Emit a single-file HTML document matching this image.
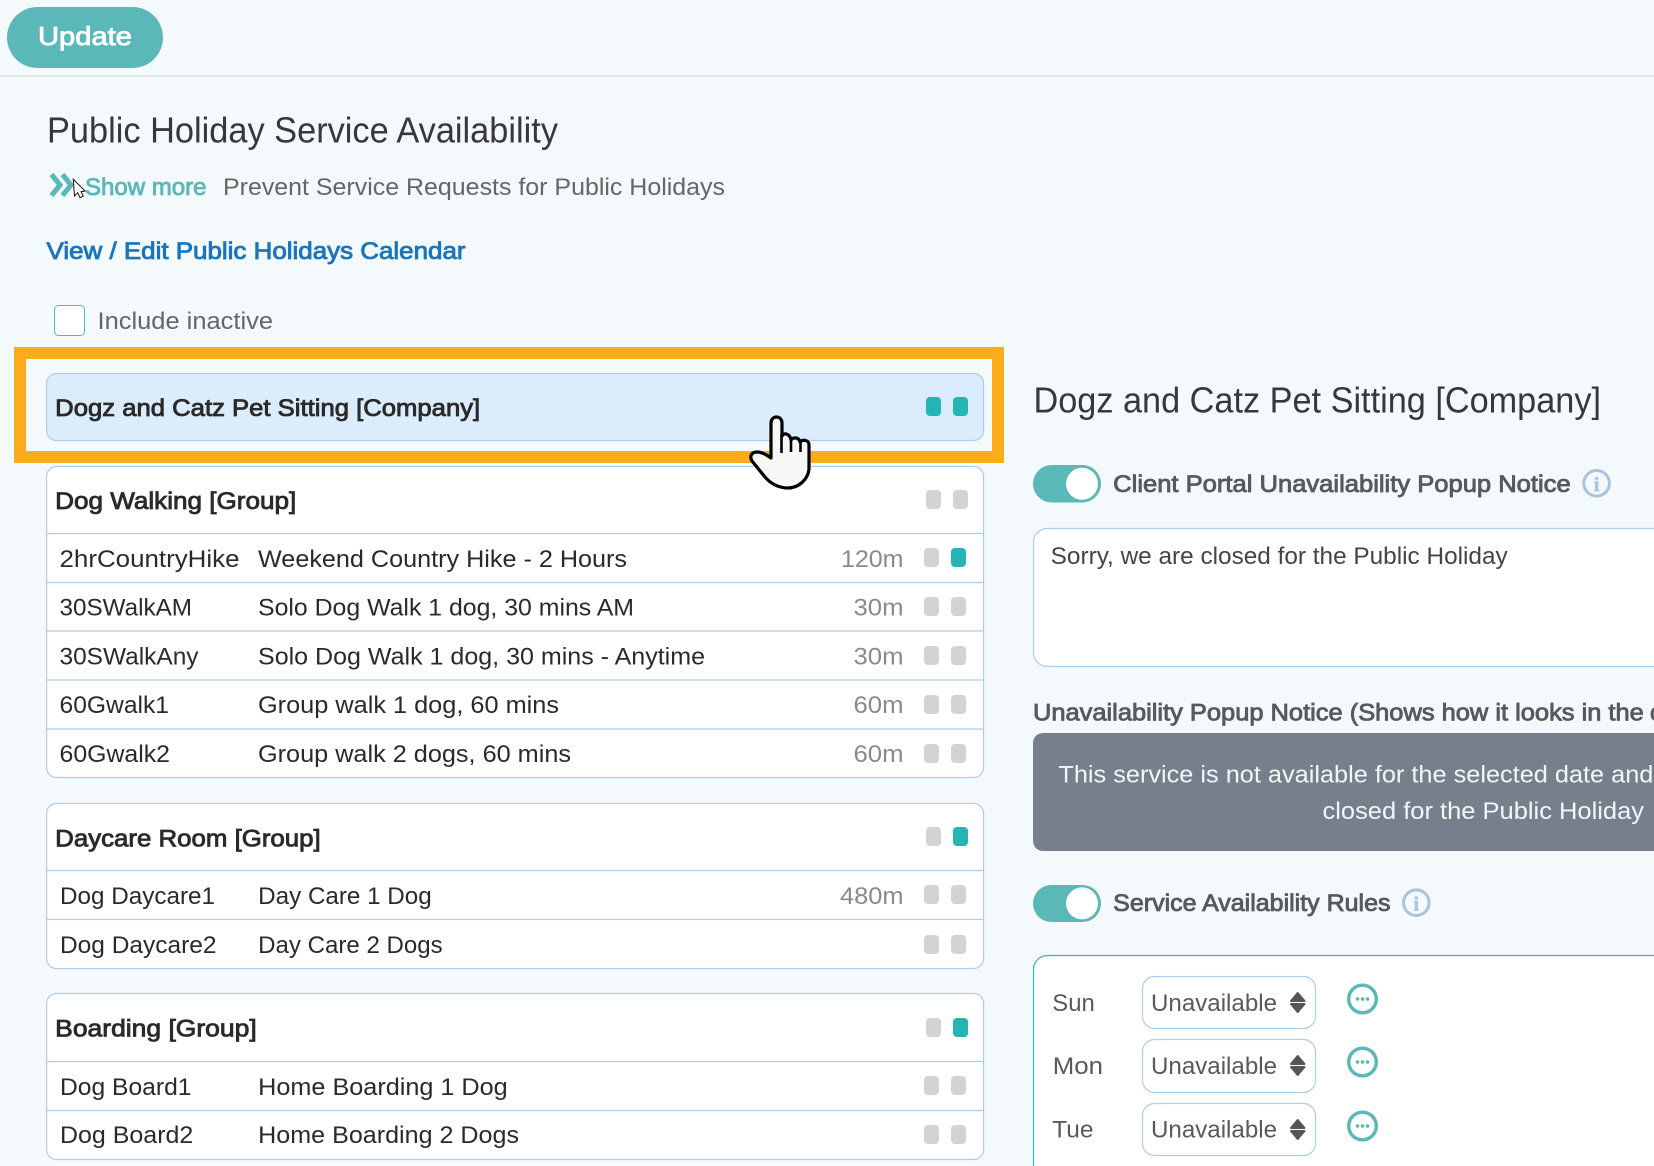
<!DOCTYPE html>
<html lang="en">
<head>
<meta charset="utf-8">
<title>Public Holiday Service Availability</title>
<style>
html,body{margin:0;padding:0;width:1654px;height:1166px;overflow:hidden;background:#f4f9fc}
svg{display:block;position:absolute;left:0;top:0}
text{font-family:"Liberation Sans",sans-serif;font-size:24px;white-space:pre}
.b{stroke-width:.85}
.h1{font-size:36px;fill:#38383a}
.dk{fill:#2a2a2a}
.b.dk{stroke:#2a2a2a}
.gy{fill:#666}
.lb{fill:#565a5e}
.b.lb{stroke:#565a5e}
.dur{fill:#8a8a8a}
.panel{fill:#fff;stroke:#aecde6;stroke-width:1.2}
.div{stroke:#aecde6;stroke-width:1.2}
.on{fill:#26b5b5}
.off{fill:#d3d3d3}
.sel{fill:#fff;stroke:#aecde6;stroke-width:1.2}
.info{fill:none;stroke:#a9c4dc;stroke-width:3}
.i{font-family:"Liberation Serif",serif;font-size:20px;font-weight:700;fill:#a9c4dc;stroke:#a9c4dc;stroke-width:.5}
.more{fill:none;stroke:#5bb8b8;stroke-width:3.4}
.dot{fill:#5bb8b8}
.arr{fill:#555;stroke:#555;stroke-width:2;stroke-linejoin:round}
</style>
</head>
<body>
<svg width="1654" height="1166" viewBox="0 0 1654 1166" xmlns="http://www.w3.org/2000/svg">
<!-- header -->
<rect x="0" y="75" width="1654" height="2" fill="#e3e8ea"/>
<rect x="7" y="7" width="156" height="61" rx="30.500" fill="#5bb8b8"/>
<text x="38" y="45" class="b" style="font-size:26px" fill="#fff" stroke="#fff" textLength="94" lengthAdjust="spacingAndGlyphs">Update</text>

<!-- title block -->
<text x="47" y="142.500" class="h1" textLength="511" lengthAdjust="spacingAndGlyphs">Public Holiday Service Availability</text>
<path d="M51.500 174.500L60 185L51.500 195.500M62.500 174.500L71 185L62.500 195.500" fill="none" stroke="#5bb8b8" stroke-width="5"/>
<text x="85" y="195" class="b" fill="#5bb8b8" stroke="#5bb8b8" textLength="121.500" lengthAdjust="spacingAndGlyphs">Show more</text>
<text x="223" y="195" class="gy" textLength="502" lengthAdjust="spacingAndGlyphs">Prevent Service Requests for Public Holidays</text>
<path d="M73.300 179.300L74.500 196L77.700 192.700L80 197.700L83.300 196L81 191.700L85 191Z" fill="#fff" stroke="#111" stroke-width="1"/>
<text x="46.500" y="259" class="b" fill="#1a75bc" stroke="#1a75bc" textLength="419" lengthAdjust="spacingAndGlyphs">View / Edit Public Holidays Calendar</text>
<rect x="54.500" y="305.500" width="30" height="30" rx="4" fill="#fff" stroke="#5bb8b8" stroke-width="1"/>
<text x="97.500" y="329" class="gy" textLength="175.500" lengthAdjust="spacingAndGlyphs">Include inactive</text>

<!-- highlighted company row -->
<rect x="20" y="353" width="978" height="104" fill="none" stroke="#fbac1c" stroke-width="12"/>
<rect x="46.600" y="373.500" width="937" height="67" rx="10" fill="#dbecfd" stroke="#aecde6" stroke-width="1.200"/>
<text x="55.200" y="416" class="b dk" textLength="425" lengthAdjust="spacingAndGlyphs">Dogz and Catz Pet Sitting [Company]</text>
<rect x="926" y="397" width="15" height="19" rx="4" class="on"/><rect x="953" y="397" width="15" height="19" rx="4" class="on"/>

<!-- Dog Walking -->
<rect x="46.600" y="466.500" width="937" height="311" rx="10" class="panel"/>
<line x1="47" x2="984" y1="533.500" y2="533.500" class="div"/>
<line x1="47" x2="984" y1="582.500" y2="582.500" class="div"/>
<line x1="47" x2="984" y1="631" y2="631" class="div"/>
<line x1="47" x2="984" y1="680" y2="680" class="div"/>
<line x1="47" x2="984" y1="729" y2="729" class="div"/>
<text x="55.200" y="509" class="b dk" textLength="241" lengthAdjust="spacingAndGlyphs">Dog Walking [Group]</text>
<rect x="926" y="490" width="15" height="19" rx="4" class="off"/><rect x="953" y="490" width="15" height="19" rx="4" class="off"/>

<text x="59.500" y="567" class="dk" textLength="180" lengthAdjust="spacingAndGlyphs">2hrCountryHike</text>
<text x="258" y="567" class="dk" textLength="369" lengthAdjust="spacingAndGlyphs">Weekend Country Hike - 2 Hours</text>
<text x="841" y="567" class="dur" textLength="62.500" lengthAdjust="spacingAndGlyphs">120m</text>
<rect x="924" y="548" width="15" height="19" rx="4" class="off"/><rect x="951" y="548" width="15" height="19" rx="4" class="on"/>

<text x="59.500" y="615.500" class="dk" textLength="132.500" lengthAdjust="spacingAndGlyphs">30SWalkAM</text>
<text x="258" y="615.500" class="dk" textLength="376" lengthAdjust="spacingAndGlyphs">Solo Dog Walk 1 dog, 30 mins AM</text>
<text x="853.500" y="615.500" class="dur" textLength="50" lengthAdjust="spacingAndGlyphs">30m</text>
<rect x="924" y="597" width="15" height="19" rx="4" class="off"/><rect x="951" y="597" width="15" height="19" rx="4" class="off"/>

<text x="59.500" y="664.500" class="dk" textLength="139" lengthAdjust="spacingAndGlyphs">30SWalkAny</text>
<text x="258" y="664.500" class="dk" textLength="447" lengthAdjust="spacingAndGlyphs">Solo Dog Walk 1 dog, 30 mins - Anytime</text>
<text x="853.500" y="664.500" class="dur" textLength="50" lengthAdjust="spacingAndGlyphs">30m</text>
<rect x="924" y="646" width="15" height="19" rx="4" class="off"/><rect x="951" y="646" width="15" height="19" rx="4" class="off"/>

<text x="59.500" y="713" class="dk" textLength="109.500" lengthAdjust="spacingAndGlyphs">60Gwalk1</text>
<text x="258" y="713" class="dk" textLength="301" lengthAdjust="spacingAndGlyphs">Group walk 1 dog, 60 mins</text>
<text x="853.500" y="713" class="dur" textLength="50" lengthAdjust="spacingAndGlyphs">60m</text>
<rect x="924" y="695" width="15" height="19" rx="4" class="off"/><rect x="951" y="695" width="15" height="19" rx="4" class="off"/>

<text x="59.500" y="762" class="dk" textLength="110.500" lengthAdjust="spacingAndGlyphs">60Gwalk2</text>
<text x="258" y="762" class="dk" textLength="313" lengthAdjust="spacingAndGlyphs">Group walk 2 dogs, 60 mins</text>
<text x="853.500" y="762" class="dur" textLength="50" lengthAdjust="spacingAndGlyphs">60m</text>
<rect x="924" y="744" width="15" height="19" rx="4" class="off"/><rect x="951" y="744" width="15" height="19" rx="4" class="off"/>

<!-- Daycare -->
<rect x="46.600" y="803.500" width="937" height="165" rx="10" class="panel"/>
<line x1="47" x2="984" y1="870.500" y2="870.500" class="div"/>
<line x1="47" x2="984" y1="919.500" y2="919.500" class="div"/>
<text x="55.200" y="846.500" class="b dk" textLength="265.500" lengthAdjust="spacingAndGlyphs">Daycare Room [Group]</text>
<rect x="926" y="827" width="15" height="19" rx="4" class="off"/><rect x="953" y="827" width="15" height="19" rx="4" class="on"/>
<text x="60" y="904" class="dk" textLength="155" lengthAdjust="spacingAndGlyphs">Dog Daycare1</text>
<text x="258.200" y="904" class="dk" textLength="173.500" lengthAdjust="spacingAndGlyphs">Day Care 1 Dog</text>
<text x="840" y="904" class="dur" textLength="63.500" lengthAdjust="spacingAndGlyphs">480m</text>
<rect x="924" y="885" width="15" height="19" rx="4" class="off"/><rect x="951" y="885" width="15" height="19" rx="4" class="off"/>
<text x="60" y="953" class="dk" textLength="156.500" lengthAdjust="spacingAndGlyphs">Dog Daycare2</text>
<text x="258.200" y="953" class="dk" textLength="184.500" lengthAdjust="spacingAndGlyphs">Day Care 2 Dogs</text>
<rect x="924" y="935" width="15" height="19" rx="4" class="off"/><rect x="951" y="935" width="15" height="19" rx="4" class="off"/>

<!-- Boarding -->
<rect x="46.600" y="993.500" width="937" height="166" rx="10" class="panel"/>
<line x1="47" x2="984" y1="1061.500" y2="1061.500" class="div"/>
<line x1="47" x2="984" y1="1110.500" y2="1110.500" class="div"/>
<text x="55.200" y="1036.500" class="b dk" textLength="201.500" lengthAdjust="spacingAndGlyphs">Boarding [Group]</text>
<rect x="926" y="1018" width="15" height="19" rx="4" class="off"/><rect x="953" y="1018" width="15" height="19" rx="4" class="on"/>
<text x="60" y="1095" class="dk" textLength="131.500" lengthAdjust="spacingAndGlyphs">Dog Board1</text>
<text x="258.200" y="1095" class="dk" textLength="249.500" lengthAdjust="spacingAndGlyphs">Home Boarding 1 Dog</text>
<rect x="924" y="1076" width="15" height="19" rx="4" class="off"/><rect x="951" y="1076" width="15" height="19" rx="4" class="off"/>
<text x="60" y="1143" class="dk" textLength="133.300" lengthAdjust="spacingAndGlyphs">Dog Board2</text>
<text x="258.200" y="1143" class="dk" textLength="260.800" lengthAdjust="spacingAndGlyphs">Home Boarding 2 Dogs</text>
<rect x="924" y="1125" width="15" height="19" rx="4" class="off"/><rect x="951" y="1125" width="15" height="19" rx="4" class="off"/>

<!-- hand cursor -->
<g transform="translate(720 390)">
<path d="M51 68L51 33C51 25 62 25 62 33L62 46C64 42 70 44 71 50C73 47 79 47 80 52C83 49 89 50 89 55L89 79C88 90 78 98 68 98C58 98 50 93 45 87L32 71C29 66 32 62 37 62C43 62 48 66 51 68Z" fill="#f7f7f7" stroke="#000" stroke-width="3.200" stroke-linejoin="round"/>
<path d="M61.500 44V63M71 50V62M80.500 52V62" fill="none" stroke="#000" stroke-width="2.600"/>
</g>

<!-- right column -->
<text x="1033.500" y="412.500" class="h1" textLength="567.500" lengthAdjust="spacingAndGlyphs">Dogz and Catz Pet Sitting [Company]</text>

<rect x="1033" y="465" width="68" height="37.500" rx="18.750" fill="#5bb8b8"/>
<circle cx="1082" cy="483.800" r="16" fill="#fff"/>
<text x="1113.200" y="492" class="b lb" textLength="457.500" lengthAdjust="spacingAndGlyphs">Client Portal Unavailability Popup Notice</text>
<circle cx="1596.600" cy="483.300" r="12.800" class="info"/>
<text x="1596.600" y="491" text-anchor="middle" class="i">i</text>

<path d="M1654 528.500H1047.500A14 14 0 0 0 1033.500 542.500V652.500A14 14 0 0 0 1047.500 666.500H1654Z" fill="#fff"/>
<path d="M1654 528.500H1047.500A14 14 0 0 0 1033.500 542.500V652.500A14 14 0 0 0 1047.500 666.500H1654" fill="none" stroke="#aecde6" stroke-width="1.200"/>
<text x="1050.700" y="564" fill="#444" textLength="457" lengthAdjust="spacingAndGlyphs">Sorry, we are closed for the Public Holiday</text>

<text x="1033" y="720.500" class="b lb" textLength="610.800" lengthAdjust="spacingAndGlyphs">Unavailability Popup Notice (Shows how it looks in the</text>
<text x="1650" y="720.500" class="b lb">c</text>
<path d="M1654 733H1043A10 10 0 0 0 1033 743V841A10 10 0 0 0 1043 851H1654Z" fill="#76808c"/>
<text x="1058.400" y="782.500" fill="#f3f6f8" textLength="595" lengthAdjust="spacingAndGlyphs">This service is not available for the selected date and</text>
<text x="1322.500" y="819" fill="#f3f6f8" textLength="321.500" lengthAdjust="spacingAndGlyphs">closed for the Public Holiday</text>

<rect x="1033" y="885" width="68" height="37" rx="18.500" fill="#5bb8b8"/>
<circle cx="1082" cy="903.400" r="16" fill="#fff"/>
<text x="1113.200" y="911" class="b lb" textLength="277.300" lengthAdjust="spacingAndGlyphs">Service Availability Rules</text>
<circle cx="1416.300" cy="902.700" r="12.800" class="info"/>
<text x="1416.300" y="910.400" text-anchor="middle" class="i">i</text>

<path d="M1654 1166V955.500H1047.500A14 14 0 0 0 1033.500 969.500V1166Z" fill="#fff"/>
<path d="M1654 955.500H1047.500A14 14 0 0 0 1033.500 969.500V1166" fill="none" stroke="#3bb3b3" stroke-width="1.200"/>

<text x="1052.300" y="1011" class="lb" textLength="42.500" lengthAdjust="spacingAndGlyphs">Sun</text>
<rect x="1142.500" y="976.500" width="173" height="52" rx="12" class="sel"/>
<text x="1151" y="1011" class="lb" textLength="126" lengthAdjust="spacingAndGlyphs">Unavailable</text>
<path d="M1297.700 993L1304.500 1001H1291Z" class="arr"/><path d="M1291 1004H1304.500L1297.700 1012Z" class="arr"/>
<circle cx="1362.500" cy="999" r="13.800" class="more"/>
<circle cx="1357.500" cy="999" r="1.800" class="dot"/><circle cx="1362.500" cy="999" r="1.800" class="dot"/><circle cx="1367.500" cy="999" r="1.800" class="dot"/>

<text x="1052.800" y="1074" class="lb" textLength="50.200" lengthAdjust="spacingAndGlyphs">Mon</text>
<rect x="1142.500" y="1039.500" width="173" height="53" rx="12" class="sel"/>
<text x="1151" y="1074" class="lb" textLength="126" lengthAdjust="spacingAndGlyphs">Unavailable</text>
<path d="M1297.700 1056L1304.500 1064H1291Z" class="arr"/><path d="M1291 1067H1304.500L1297.700 1075Z" class="arr"/>
<circle cx="1362.500" cy="1062" r="13.800" class="more"/>
<circle cx="1357.500" cy="1062" r="1.800" class="dot"/><circle cx="1362.500" cy="1062" r="1.800" class="dot"/><circle cx="1367.500" cy="1062" r="1.800" class="dot"/>

<text x="1052.200" y="1137.700" class="lb" textLength="41.300" lengthAdjust="spacingAndGlyphs">Tue</text>
<rect x="1142.500" y="1103.500" width="173" height="52" rx="12" class="sel"/>
<text x="1151" y="1137.700" class="lb" textLength="126" lengthAdjust="spacingAndGlyphs">Unavailable</text>
<path d="M1297.700 1120L1304.500 1128H1291Z" class="arr"/><path d="M1291 1131H1304.500L1297.700 1139Z" class="arr"/>
<circle cx="1362.500" cy="1126" r="13.800" class="more"/>
<circle cx="1357.500" cy="1126" r="1.800" class="dot"/><circle cx="1362.500" cy="1126" r="1.800" class="dot"/><circle cx="1367.500" cy="1126" r="1.800" class="dot"/>
</svg>
</body>
</html>
